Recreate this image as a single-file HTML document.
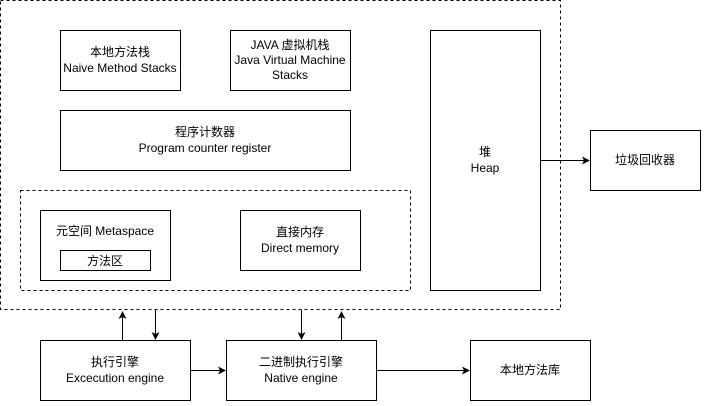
<!DOCTYPE html>
<html><head><meta charset="utf-8"><style>
body{margin:0;background:#fff;width:711px;height:401px;overflow:hidden;font-family:"Liberation Sans","Noto Sans CJK SC",sans-serif;}
</style></head><body>
<svg width="711" height="401" xmlns="http://www.w3.org/2000/svg" font-family="Liberation Sans, Noto Sans CJK SC, sans-serif" font-size="12" fill="#000" text-anchor="middle">
<defs><marker id="a" markerWidth="8" markerHeight="8" refX="7" refY="4" orient="auto" markerUnits="userSpaceOnUse"><path d="M0,0 L8,4 L0,8 L2,4z" fill="#000"/></marker></defs>
<g fill="none" stroke="#000" stroke-width="1">
<rect x="0.5" y="0.5" width="560" height="309" stroke-dasharray="3,3"/>
<rect x="20.5" y="190.5" width="390" height="100" stroke-dasharray="3,3"/>
<rect x="60.5" y="30.5" width="120" height="60"/>
<rect x="230.5" y="30.5" width="120" height="60"/>
<rect x="60.5" y="110.5" width="290" height="60"/>
<rect x="40.5" y="210.5" width="130" height="70"/>
<rect x="60.5" y="250.5" width="90" height="20"/>
<rect x="240.5" y="210.5" width="120" height="60"/>
<rect x="430.5" y="30.5" width="110" height="260"/>
<rect x="590.5" y="130.5" width="110" height="60"/>
<rect x="40.5" y="340.5" width="150" height="60"/>
<rect x="226.5" y="340.5" width="150" height="60"/>
<rect x="470.5" y="340.5" width="120" height="60"/>
<path d="M540.5,160.5H589" marker-end="url(#a)"/>
<path d="M122.5,340V312" marker-end="url(#a)"/>
<path d="M155.5,310V339" marker-end="url(#a)"/>
<path d="M301.5,310V339" marker-end="url(#a)"/>
<path d="M341.5,340V312" marker-end="url(#a)"/>
<path d="M190.5,370.5H225" marker-end="url(#a)"/>
<path d="M376.5,370.5H469" marker-end="url(#a)"/>
</g>
<text x="120" y="56">本地方法栈</text><text x="120" y="72">Naive Method Stacks</text>
<text x="290" y="49">JAVA 虚拟机栈</text><text x="290" y="64">Java Virtual Machine</text><text x="290" y="79">Stacks</text>
<text x="205" y="136">程序计数器</text><text x="205" y="152">Program counter register</text>
<text x="105" y="235">元空间 Metaspace</text>
<text x="105" y="265">方法区</text>
<text x="300" y="236">直接内存</text><text x="300" y="252">Direct memory</text>
<text x="485" y="156">堆</text><text x="485" y="172">Heap</text>
<text x="645" y="164">垃圾回收器</text>
<text x="115" y="366">执行引擎</text><text x="115" y="382">Excecution engine</text>
<text x="301" y="366">二进制执行引擎</text><text x="301" y="382">Native engine</text>
<text x="530" y="374">本地方法库</text>
</svg>
</body></html>
